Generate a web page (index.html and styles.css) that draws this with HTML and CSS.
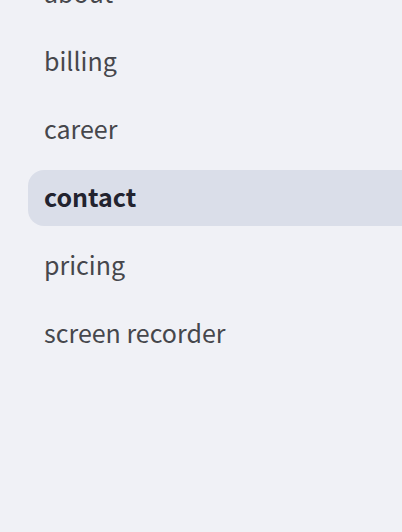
FILE: index.html
```html
<!DOCTYPE html>
<html lang="en">
<head>
<meta charset="utf-8">
<meta name="viewport" content="width=device-width, initial-scale=1">
<title>Pages</title>
<link rel="stylesheet" href="styles.css">
</head>
<body>
<nav class="menu" aria-label="Pages">
  <a class="item" href="#about">about</a>
  <a class="item" href="#billing">billing</a>
  <a class="item" href="#career">career</a>
  <a class="item item-active" href="#contact" aria-current="page">contact</a>
  <a class="item" href="#pricing">pricing</a>
  <a class="item" href="#screen-recorder">screen recorder</a>
</nav>
</body>
</html>
```
FILE: styles.css
```css
* {
  box-sizing: border-box;
}

body {
  margin: 0;
  min-height: 100vh;
  overflow: hidden;
  background: #f0f1f6;
  font-family: "Noto Sans CJK SC", "Noto Sans", sans-serif;
}

.menu {
  display: flex;
  flex-direction: column;
  gap: 12px;
  margin-top: -34px;
  padding-left: 28px;
}

.item {
  height: 56px;
  padding: 0 16px;
  border-radius: 16px 0 0 16px;
  color: #46474c;
  font-size: 25px;
  line-height: 52px;
  text-decoration: none;
}

.item-active {
  background: #dadee9;
  color: #22232f;
  font-weight: 700;
}
```
